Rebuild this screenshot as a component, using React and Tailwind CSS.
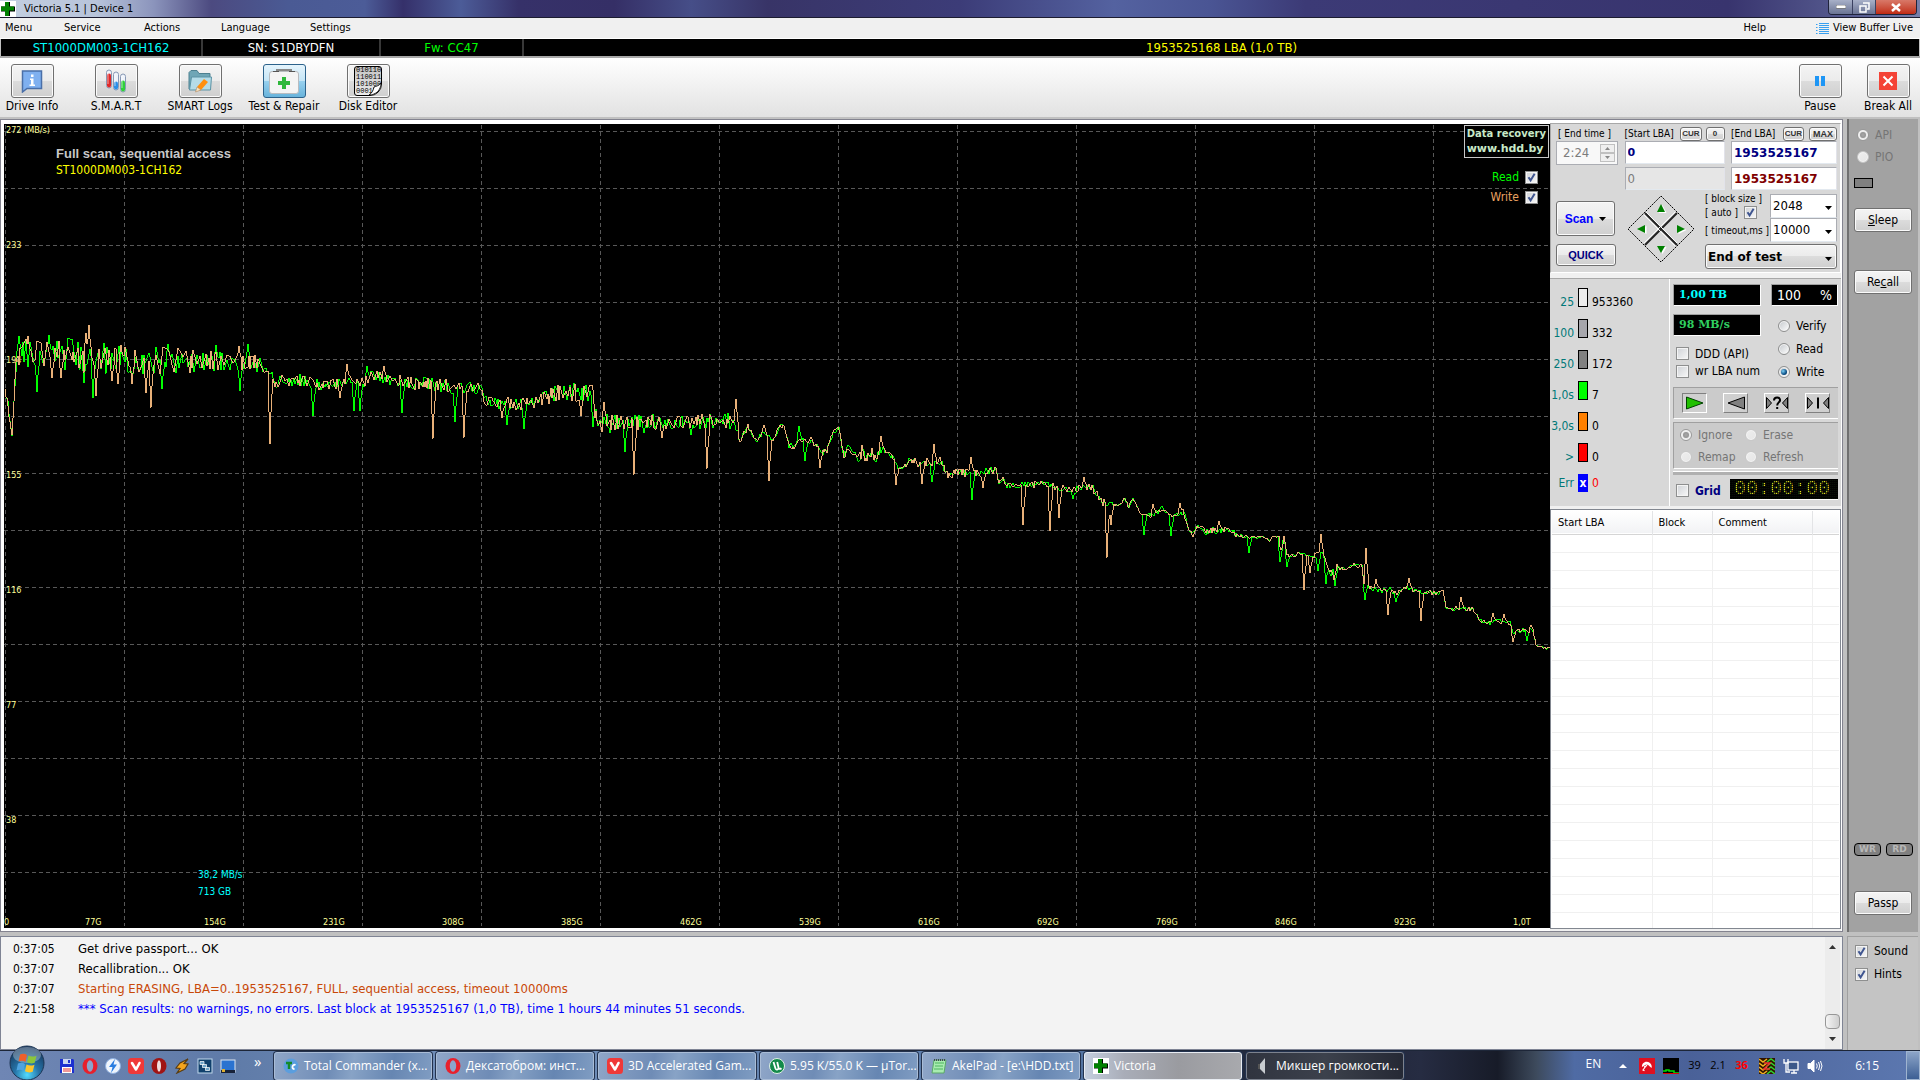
import React from "react";

const ui = "font-['DejaVu_Sans_Condensed','DejaVu_Sans',sans-serif]";

/* ---------- chart data: [x, y, spread] along the curve, then single peaks [x, y] ---------- */
const BASE = [
  [5,389,2],[8,405,4],[12,438,3],[15,380,6],[18,354,15],[60,355,15],[100,357,15],[124,360,13],[160,360,12],[200,361,10],[240,362,8],[262,364,7],
  [267,371,1],[272,373,2],[275,386,4],[284,378,5],[292,384,5],[300,380,6],[320,386,5],[335,384,5],[350,380,5],[365,382,6],[372,376,5],[395,380,5],
  [415,383,6],[440,385,7],[460,387,7],[480,388,5],[486,402,5],[500,403,6],[520,405,6],[545,398,7],[560,393,8],[592,393,8],[597,422,7],[735,421,7],
  [740,440,2],[748,427,3],[757,441,1],[764,429,4],[773,441,1],[780,426,3],[784,426,1],[789,445,3],[793,448,3],[798,440,3],[813,441,4],[823,452,3],
  [827,450,3],[833,433,3],[839,428,2],[844,457,3],[847,447,3],[852,452,3],[860,458,5],[862,450,4],[866,460,4],[872,453,4],[876,460,3],[880,450,3],
  [884,450,4],[889,455,3],[894,457,2],[898,469,1],[903,468,1],[909,460,4],[919,463,4],[927,462,4],[931,467,3],[940,460,4],[946,473,3],[950,477,4],
  [954,472,3],[968,473,4],[980,473,5],[996,470,3],[999,483,4],[1003,477,4],[1005,485,3],[1021,485,3],[1033,485,3],[1042,482,2],[1046,485,3],
  [1062,488,4],[1076,490,3],[1082,487,4],[1093,487,5],[1099,498,3],[1103,503,3],[1109,502,4],[1115,505,1],[1121,504,1],[1125,498,2],[1129,507,2],
  [1133,498,2],[1140,512,1],[1144,515,1],[1152,515,2],[1162,508,3],[1168,513,2],[1172,516,1],[1184,512,3],[1188,528,2],[1192,533,3],[1196,527,2],
  [1202,528,2],[1205,532,3],[1211,530,3],[1227,530,3],[1232,532,3],[1237,535,2],[1246,537,2],[1255,538,2],[1262,536,0],[1270,540,2],[1273,536,0],
  [1279,537,1],[1281,550,2],[1284,538,2],[1287,555,2],[1293,555,2],[1303,553,1],[1306,555,1],[1312,557,2],[1318,555,3],[1322,553,2],[1327,565,3],
  [1330,572,4],[1337,567,4],[1345,569,1],[1354,566,3],[1362,566,2],[1364,583,2],[1368,585,1],[1371,589,3],[1389,590,3],[1398,593,3],[1405,587,1],
  [1414,590,2],[1425,593,1],[1429,592,2],[1437,594,2],[1443,590,1],[1446,607,1],[1451,609,3],[1473,609,2],[1480,620,1],[1487,623,2],[1498,621,2],
  [1510,623,2],[1513,633,1],[1518,631,2],[1533,630,2],[1536,645,1],[1546,648,1],[1550,647,1],
];
const WRITE_PEAKS = [
  [28,336],[52,378],[61,378],[86,333],[89,325],[96,396],[112,381],[118,384],[121,345],[132,384],[146,393],[151,408],[239,346],[270,444],[340,398],
  [347,364],[384,366],[433,439],[464,438],[502,418],[581,416],[602,432],[604,402],[634,475],[662,438],[707,469],[736,399],[769,481],[820,468],
  [881,436],[896,485],[922,484],[934,444],[971,457],[983,488],[1023,525],[1050,531],[1059,518],[1084,477],[1107,558],[1111,525],[1153,504],
  [1180,503],[1193,537],[1219,521],[1281,550],[1304,590],[1310,573],[1321,534],[1334,580],[1366,548],[1376,579],[1388,615],[1409,578],
  [1421,621],[1461,597],[1493,613],[1504,614],[1513,642],[1531,625],
];
const READ_PEAKS = [
  [19,336],[37,392],[49,335],[84,383],[93,398],[162,389],[168,344],[216,345],[240,391],[248,344],[313,416],[354,411],[360,411],[367,366],[402,413],
  [455,422],[507,425],[524,429],[574,383],[593,427],[610,433],[625,452],[644,433],[691,435],[799,426],[805,461],[932,482],[972,500],[1073,499],
  [1144,535],[1171,536],[1249,553],[1280,562],[1287,567],[1318,571],[1326,584],[1335,586],[1365,600],[1396,602],[1527,641],
];

function trace(peaks, seed) {
  let s = seed;
  const rnd = () => {
    s = (s * 16807) % 2147483647;
    return s / 2147483647;
  };
  const pts = [];
  let k = 0;
  let sign = 1;
  let prev = 0;
  let next = 0;
  let left = 0;
  let span = 1;
  for (let x = 5; x <= 1550; x += 1) {
    while (k < BASE.length - 2 && BASE[k + 1][0] <= x) k += 1;
    const a = BASE[k];
    const b = BASE[k + 1];
    const t = Math.min(1, (x - a[0]) / (b[0] - a[0]));
    const mid = a[1] + (b[1] - a[1]) * t;
    const amp = a[2] + (b[2] - a[2]) * t;
    if (left === 0) {
      prev = next;
      sign = rnd() > 0.2 ? -sign : sign;
      next = sign * (0.15 + rnd());
      span = 1 + Math.floor(rnd() * (amp > 8 ? 4 : 3));
      left = span;
    }
    left -= 1;
    let y = mid + amp * (prev + (next - prev) * (1 - left / span));
    for (const p of peaks) {
      const d = Math.abs(p[0] - x);
      if (d === 0) y = p[1];
      else if (d === 1) y = mid + (p[1] - mid) * 0.55;
      else if (d === 2 && x > p[0]) y = mid + (p[1] - mid) * 0.3;
    }
    pts.push(`${x},${Math.round(y)}`);
  }
  return pts.join(" ");
}
const READ = trace(READ_PEAKS, 4711);
const WRITE = trace(WRITE_PEAKS, 90210);

const H_LINES = Array.from({ length: 14 }, (_, i) => 131 + i * 57);
const V_LINES = Array.from({ length: 13 }, (_, i) => 5 + i * 119);
const Y_LABELS = ["272 (MB/s)", "233", "194", "155", "116", "77", "38"];
const X_LABELS = ["77G", "154G", "231G", "308G", "385G", "462G", "539G", "616G", "692G", "769G", "846G", "923G", "1,0T"];

/* ---------- small controls ---------- */
function Check({ label, checked = false, before = false, className = "", aria }) {
  const box = (
    <span className="relative inline-flex h-[13px] w-[13px] shrink-0">
      <input type="checkbox" defaultChecked={checked} aria-label={aria} className="peer h-[13px] w-[13px] appearance-none border border-[#8e8f8f] bg-gradient-to-br from-[#cfd2d6] to-[#f8f8f8] shadow-[inset_0_0_0_1px_#f4f4f4]" />
      <svg viewBox="0 0 13 13" className="pointer-events-none absolute inset-0 hidden peer-checked:block">
        <path d="M3.5 6.2 L5.6 9.4 L9.6 2.8" fill="none" stroke="#3f5590" strokeWidth="2" />
      </svg>
    </span>
  );
  return (
    <label className={`flex items-center gap-1.5 whitespace-nowrap ${className}`}>
      {before ? label : null}
      {box}
      {before ? null : label}
    </label>
  );
}

function Radio({ label, name, checked = false, disabled = false, className = "" }) {
  return (
    <label className={`flex items-center gap-1.5 whitespace-nowrap ${disabled ? "text-[#757575]" : "text-black"} ${className}`}>
      <span className="relative inline-flex h-3 w-3 shrink-0">
        <input type="radio" name={name} defaultChecked={checked} disabled={disabled} className="peer h-3 w-3 appearance-none rounded-full border border-[#8e8f8f] bg-gradient-to-br from-[#c4c8cc] to-white shadow-[inset_0_0_0_1px_#f4f4f4] checked:disabled:border-[#999999] disabled:border-[#c8c8c8] disabled:from-[#eeeeee] disabled:to-[#e6e6e6]" />
        <span className="pointer-events-none absolute left-[3px] top-[3px] hidden h-1.5 w-1.5 rounded-full bg-[radial-gradient(circle_at_35%_35%,#7fd0f5,#0a4f86_60%,#06294a)] peer-checked:block peer-checked:peer-disabled:bg-[radial-gradient(circle,#a8a8a8,#8a8a8a)]" />
      </span>
      {label}
    </label>
  );
}

const raised = "border border-[#707070] rounded-[3px] bg-[linear-gradient(#f4f4f4_0%,#ebebeb_50%,#dcdcdc_50%,#cfcfcf_100%)] shadow-[inset_0_0_0_1px_#fbfbfb]";

function ToolButton({ label, children, active = false }) {
  return (
    <button type="button" className="flex w-16 flex-col items-center whitespace-nowrap text-[12px] leading-4 text-black">
      <span className={`flex h-[34px] w-[43px] items-center justify-center ${active ? "rounded-[3px] border border-[#2c628b] bg-[linear-gradient(#e5f4fc_0%,#c4e5f6_50%,#98d1ef_50%,#68b3db_100%)]" : raised}`}>
        {children}
      </span>
      {label}
    </button>
  );
}

const CrossIcon = ({ className }) => (
  <svg viewBox="0 0 16 16" className={className}>
    <rect width="16" height="16" fill="#fff" />
    <path d="M5 1h5v4.5h5v5h-5V15H5v-4.5H1v-5h4z" fill="#000" />
    <path d="M5 1h4v4.5h5v4h-5V15H5v-5H1V5.500h4z" fill="#008000" />
  </svg>
);

const InfoIcon = () => (
  <svg viewBox="0 0 22 24" className="h-6 w-[22px]">
    <path d="M1.500 2h19v17.500H6L1.500 23z" fill="#7fb0f0" stroke="#4a6fa8" strokeWidth="1.500" />
    <path d="M10 5.500h2.500v2.500H10zM9 9.500h3.500v6h1.500v1.500H8.500v-1.500H10v-4.500H9z" fill="#fff" />
  </svg>
);
const TubesIcon = () => (
  <svg viewBox="0 0 22 24" className="h-6 w-[22px]">
    {[[1, 1, "#e02828", 14], [8, 3, "#2a8fe8", 8], [15, 5, "#2fd03a", 11]].map(([x, y, c, h]) => (
      <g key={c}>
        <rect x={x + 0.5} y={y} width="5" height="18" rx="2.500" fill="#eef3fa" stroke="#8898b4" />
        <rect x={x + 1} y={y + 17.500 - h} width="4" height={h} rx="2" fill={c} />
        <rect x={x + 1.500} y={y + 2} width="1" height="12" fill="#fff" opacity=".6" />
      </g>
    ))}
  </svg>
);
const FolderIcon = () => (
  <svg viewBox="0 0 26 24" className="h-6 w-[26px]">
    <path d="M2 20V3.500L4 1.500h6l2 3h11V20z" fill="#6fa6b6" stroke="#4d8090" />
    <path d="M4.500 8h20L23.500 21H2.500z" fill="#b5dce8" stroke="#5c93a5" />
    <path d="M10 18l7-8 4 3-7 8z" fill="#ff9010" />
    <path d="M10 18l4 3-5.500 2z" fill="#fbe3c0" stroke="#b08a60" strokeWidth=".6" />
  </svg>
);
const KitIcon = () => (
  <svg viewBox="0 0 32 28" className="h-7 w-8">
    <path d="M9 5V3h14v2" fill="none" stroke="#888" strokeWidth="2" />
    <rect x="1.500" y="4.500" width="29" height="22" rx="2.500" fill="#f4f4f4" stroke="#b8bcc0" />
    <path d="M5 4.500h6M21 4.500h6" stroke="#555" strokeWidth="1" />
    <path d="M14 10h4v4h4v4h-4v4h-4v-4h-4v-4h4z" fill="#2fb83c" />
  </svg>
);
const BinaryIcon = () => (
  <span className="relative block h-[30px] w-[28px] overflow-hidden rounded-[3px] rounded-br-[12px] border border-black bg-gradient-to-b from-[#c4c4c4] to-[#ececec] pl-px text-left font-['Liberation_Mono',monospace] text-[7px] leading-[7px] text-black">
    010110<br />110011<br />101000<br />0001
    <svg viewBox="0 0 12 12" className="absolute bottom-0 right-0 h-3 w-3">
      <path d="M12 0C10 3 7 3 5 4 4 8 3 10 0 12c7 0 12-5 12-12z" fill="#fff" stroke="#111" strokeWidth="1" />
    </svg>
  </span>
);

const field = "min-w-0 border border-[#abadb3] border-b-[#e3e9ef] border-r-[#e2e3ea] px-0.5 h-[23px] w-full leading-none";

function Tiny({ children }) {
  return <button type="button" className={`${raised} h-[14px] min-w-[19px] shrink-0 px-px font-['Liberation_Sans',sans-serif] text-[8px] font-bold leading-[12px] text-[#333]`}>{children}</button>;
}

function DropBox({ value, label, className = "" }) {
  return (
    <span className={`relative flex ${className}`}>
      <select aria-label={label} defaultValue={value} className="w-full appearance-none bg-transparent pl-0.5">
        <option>{value}</option>
      </select>
      <svg viewBox="0 0 7 4" className="pointer-events-none absolute right-1 top-1/2 h-1 w-[7px]"><path d="M0 0h7L3.500 4z" /></svg>
    </span>
  );
}

function Pad() {
  const arrows = ["M33 8l4 8h-8z", "M9 33l8-4v8z", "M57 33l-8-4v8z", "M33 57l-4-7h8z"];
  return (
    <svg viewBox="0 0 66 66" className="mt-0.5 h-[66px] w-[66px] shrink-0">
      <path d="M33 0L66 33 33 66 0 33z" fill="#d8d8d8" stroke="#000" strokeDasharray="2 1" />
      <path d="M17 17l32 32M49 17L17 49" stroke="#222" strokeWidth="2" />
      <path d="M16 19l31 31M18 16l31 31M47 16L16 47" stroke="#fafafa" />
      {arrows.map((d) => (
        <g key={d}>
          <path d={d} fill="#fff" transform="translate(1.500 1)" />
          <path d={d} fill="#008000" />
        </g>
      ))}
    </svg>
  );
}

const LEGEND = [
  ["25", "bg-[#ececec]", "953360"],
  ["100", "bg-[#a6a6ac]", "332"],
  ["250", "bg-[#808080]", "172"],
  ["1,0s", "bg-[#00ff00]", "7"],
  ["3,0s", "bg-[#ff8000]", "0"],
  [">", "bg-[#ff0000]", "0"],
];

const lcd = "flex h-[22px] items-center border border-[#a0a0a0] border-b-white border-r-white bg-black px-[5px]";

/* ---------- sections ---------- */
function Chart() {
  return (
    <div className="relative min-w-0 flex-1 overflow-hidden bg-black">
      <svg className="absolute inset-0 h-full w-full" shapeRendering="crispEdges" role="img" aria-label="Transfer speed chart">
        <g transform="translate(-4 -124)">
          <g stroke="#585858" strokeWidth="1" strokeDasharray="4 3" fill="none">
            {H_LINES.map((y) => <path key={y} d={`M4 ${y + 0.5}H1551`} />)}
            {V_LINES.map((x) => <path key={x} d={`M${x + 0.5} 125V926`} />)}
          </g>
          <g fill="#ffff99" className="font-['DejaVu_Sans_Condensed','DejaVu_Sans',sans-serif] text-[9px]" shapeRendering="auto">
            {Y_LABELS.map((t, i) => <text key={t} x="6" y={133 + i * 115}>{t}</text>)}
            <text x="4" y="925">0</text>
            {X_LABELS.map((t, i) => <text key={t} x={85 + i * 119} y="925">{t}</text>)}
          </g>
          <polyline points={READ} fill="none" stroke="#00ff00" />
          <polyline points={WRITE} fill="none" stroke="#e8b078" />
        </g>
      </svg>
      <div className="absolute left-[52px] top-[22px] font-['Liberation_Sans',sans-serif] text-[13px] font-bold leading-4 text-[#c8c8c8]">Full scan, sequential access</div>
      <div className="absolute left-[52px] top-[38px] text-[12px] leading-4 text-[#ffff00]">ST1000DM003-1CH162</div>
      <div className="absolute bottom-[28px] left-[194px] text-[10px] leading-[17px] text-[#00ffff]">38,2 MB/s<br />713 GB</div>
      <div className="absolute right-px top-px border border-[#c8c8c8] bg-black px-[2px] pb-0.5 font-['DejaVu_Sans',sans-serif] font-bold text-[#c8e8c8]">
        <div className="text-[10px] leading-4">Data recovery</div>
        <div className="text-[11px] leading-[13px]">www.hdd.by</div>
      </div>
      <div className="absolute right-3 top-[46px] flex flex-col items-end gap-[5px] text-[12px] leading-[15px]">
        <Check before checked label={<span className="text-[#00ff00]">Read</span>} />
        <Check before checked label={<span className="text-[#e8a060]">Write</span>} />
      </div>
    </div>
  );
}

function ScanSettings() {
  return (
    <section className="flex h-[150px] shrink-0 flex-col border border-[#a8a8a8] border-b-white border-r-white bg-[#d8d8d8] pl-[5px] pr-[3px] pt-0.5 text-[11px]">
      <div className="grid grid-cols-[62px_100px_106px] justify-between">
        <div>
          <label htmlFor="endtime" className="flex h-[15px] items-center pl-0.5 text-[10px]">[ End time ]</label>
          <div className="flex h-[24px] items-center justify-between border border-[#abadb3] bg-[#f8f8f8] pl-1.5 pr-0.5 text-[13px] text-[#7c7c7c]">
            <input id="endtime" defaultValue="2:24" disabled className="w-8 bg-transparent" />
            <span className="flex flex-col">
              <button type="button" aria-label="Later" className="flex h-[9px] w-[15px] items-center justify-center border border-[#c0c0c0] bg-[#efefef]"><svg viewBox="0 0 5 3" className="w-[5px]"><path d="M0 3h5L2.500 0z" fill="#888" /></svg></button>
              <button type="button" aria-label="Earlier" className="flex h-[9px] w-[15px] items-center justify-center border border-[#c0c0c0] bg-[#efefef]"><svg viewBox="0 0 5 3" className="w-[5px]"><path d="M0 0h5L2.500 3z" fill="#888" /></svg></button>
            </span>
          </div>
        </div>
        <div>
          <div className="flex h-[15px] items-center gap-1 whitespace-nowrap text-[10px]"><label htmlFor="startlba" className="flex-1">[Start LBA]</label><Tiny>CUR</Tiny><Tiny>0</Tiny></div>
          <input id="startlba" defaultValue="0" className={`${field} bg-white font-['DejaVu_Sans',sans-serif] text-[11px] font-bold text-[#000080]`} />
          <input aria-label="Current LBA" defaultValue="0" disabled className={`${field} mt-[3px] bg-[#e6e6e6] text-[13px] text-[#7c7c7c]`} />
        </div>
        <div>
          <div className="flex h-[15px] items-center gap-[5px] whitespace-nowrap text-[10px]"><label htmlFor="endlba" className="flex-1">[End LBA]</label><Tiny>CUR</Tiny><Tiny><span className="px-0.5 text-[9px]">MAX</span></Tiny></div>
          <input id="endlba" defaultValue="1953525167" className={`${field} bg-white font-['DejaVu_Sans',sans-serif] text-[12px] font-bold text-[#000080]`} />
          <input aria-label="Last LBA" defaultValue="1953525167" className={`${field} mt-[3px] bg-white font-['DejaVu_Sans',sans-serif] text-[12px] font-bold text-[#800000]`} />
        </div>
      </div>
      <div className="mt-1 flex justify-between">
        <div className="flex flex-col gap-2 pt-[7px]">
          <button type="button" className={`${raised} flex h-[35px] w-[59px] items-center justify-center gap-1.5 font-['Liberation_Sans',sans-serif] text-[12px] font-bold text-[#0000ff]`}>Scan<svg viewBox="0 0 7 4" className="w-[7px]"><path d="M0 0h7L3.500 4z" /></svg></button>
          <button type="button" className={`${raised} h-[22px] w-[60px] font-['Liberation_Sans',sans-serif] text-[11px] font-bold text-[#000080]`}>QUICK</button>
        </div>
        <Pad />
        <div className="flex w-[132px] flex-col gap-0.5">
          <div className="flex">
            <div className="flex flex-1 flex-col whitespace-nowrap text-[10px] leading-[10px]">
              <span>[ block size ]</span>
              <Check before label="[ auto ]" checked className="mt-0.5" />
              <span className="mt-[7px]">[ timeout,ms ]</span>
            </div>
            <div className="flex w-[67px] flex-col text-[13px]">
              <DropBox label="block size" value="2048" className="h-[24px] border border-[#abadb3] border-b-[#e3e9ef] bg-white" />
              <DropBox label="timeout,ms" value="10000" className="h-[24px] border border-[#abadb3] border-b-[#e3e9ef] bg-white" />
            </div>
          </div>
          <DropBox label="After the scan" value="End of test" className={`${raised} h-[25px] text-[12px] font-bold font-['DejaVu_Sans',sans-serif]`} />
        </div>
      </div>
    </section>
  );
}

function Transport({ label, pressed, children }) {
  return (
    <button type="button" aria-label={label} className={`flex h-5 w-[25px] items-center justify-center border ${pressed ? "border-[#808080] border-b-white border-r-white" : "border-white border-b-[#808080] border-r-[#808080]"} bg-[#cfcfcf]`}>
      <svg viewBox="0 0 22 16" className="h-4 w-[22px]" fill="#808080" stroke="#000">{children}</svg>
    </button>
  );
}

function Status() {
  return (
    <section className="mt-[5px] flex h-[228px] shrink-0 border-t border-[#a8a8a8] bg-[#d8d8d8] text-[12px]">
      <ul className="flex w-[120px] flex-col border-r border-white pt-[9px]">
        {LEGEND.map(([name, color, n]) => (
          <li key={name} className="flex h-[31px] items-start">
            <span className="mt-[7px] w-[26px] pr-0.5 text-right leading-[15px] text-[#007878]">{name}</span>
            <span className={`ml-[2px] h-[19px] w-[10px] border border-black ${color}`} />
            <span className="mt-[7px] pl-1 leading-[15px]">{n}</span>
          </li>
        ))}
        <li className="flex items-center">
          <span className="w-[26px] pr-0.5 text-right text-[#007878]">Err</span>
          <span className="ml-[2px] flex h-[18px] w-[10px] items-center justify-center bg-[#0000ff] font-bold text-white">x</span>
          <span className="pl-1 text-[#ff0000]">0</span>
        </li>
      </ul>
      <div className="flex flex-1 flex-col pl-[3px] pr-[3px] pt-[5px]">
        <div className="flex justify-between">
          <div className="flex w-[88px] flex-col">
            <div className={`${lcd} font-['DejaVu_Serif','DejaVu_Sans',serif] text-[11px] font-bold text-[#00ffff]`}>1,00 TB</div>
            <div className={`${lcd} mt-2 font-['DejaVu_Serif','DejaVu_Sans',serif] text-[11px] font-bold text-[#30d060]`}>98 MB/s</div>
            <Check className="mt-[9px] h-[17px] pl-[3px]" label="DDD (API)" />
            <Check className="h-[18px] pl-[3px]" label="wr LBA num" />
          </div>
          <div className="flex w-[67px] flex-col">
            <div className={`${lcd} justify-between text-[14px] text-white`}><span>100</span><span>%</span></div>
            <Radio className="mt-[8px] h-[23px] pl-[7px]" name="mode" label="Verify" />
            <Radio className="h-[23px] pl-[7px]" name="mode" label="Read" />
            <Radio className="h-[23px] pl-[7px]" name="mode" label="Write" checked />
          </div>
        </div>
        <div className="mt-[4px] flex h-[32px] items-center justify-between border-l border-t border-b border-[#a0a0a0] border-b-white bg-[#cbcbcb] px-[8px]">
          <Transport label="Forward" pressed><path d="M2.500 2v12L19 8z" fill="#20c000" stroke="#004000" /></Transport>
          <Transport label="Backward"><path d="M19.500 2v12L3 8z" /></Transport>
          <Transport label="Random"><path d="M.5 2.500v11l5-5.500zM21.500 2.500v11l-5-5.500z" /><path d="M8 5.500c0-4 6.500-4 6 0-.3 2-2.800 2-2.800 5M11.200 12v2" fill="none" strokeWidth="2" /></Transport>
          <Transport label="Butterfly"><path d="M.5 2.500v11l5-5.500zM21.500 2.500v11l-5-5.500z" /><path d="M11 2.500v11" strokeWidth="2" /></Transport>
        </div>
        <div className="mt-[3px] grid h-[47px] grid-cols-[65px_1fr] content-around border-l border-t border-b border-[#a0a0a0] border-b-white bg-[#cbcbcb] pl-[6px] pt-px">
          <Radio name="bad" label="Ignore" checked disabled />
          <Radio name="bad" label="Erase" disabled />
          <Radio name="bad" label="Remap" disabled />
          <Radio name="bad" label="Refresh" disabled />
        </div>
        <div className="mt-[2px] h-1 border-t border-white bg-[#b0b0b0]" />
        <div className="mt-[4px] flex items-center justify-between">
          <Check className="pl-[3px] pt-0.5" label={<span className="font-['DejaVu_Sans_Condensed','DejaVu_Sans',sans-serif] font-bold text-[#000080]">Grid</span>} />
          <div className="relative flex h-[21px] w-[108px] items-center border-b border-white bg-black pl-1 font-['Liberation_Mono',monospace] text-[20px] leading-none text-[#e0e020]">
            00:00:00
            <span className="pointer-events-none absolute inset-0 bg-[repeating-linear-gradient(90deg,transparent_0_1px,#000000b0_1px_2px),repeating-linear-gradient(transparent_0_1px,#0a1408c0_1px_2px)]" />
          </div>
        </div>
      </div>
    </section>
  );
}

function DefectTable() {
  return (
    <div className="mt-[3px] flex min-h-0 flex-1 flex-col overflow-hidden border border-[#828790] bg-white p-px">
      <table className="w-full table-fixed border-collapse text-[11px]">
        <colgroup><col className="w-[100px]" /><col className="w-[60px]" /><col className="w-[100px]" /><col /></colgroup>
        <thead>
          <tr className="h-[23px] border-b border-[#d5d5d5] bg-gradient-to-b from-white to-[#f2f3f5] text-left">
            <th className="border-r border-[#e3e4e6] pl-1.5 pt-0.5 font-normal">Start LBA</th>
            <th className="border-r border-[#e3e4e6] pl-1.5 pt-0.5 font-normal">Block</th>
            <th className="border-r border-[#e3e4e6] pl-1.5 pt-0.5 font-normal">Comment</th>
            <th aria-label="Spare" />
          </tr>
        </thead>
        <tbody>
          {Array.from({ length: 22 }, (_, i) => (
            <tr key={i} className="h-[18px] border-b border-[#f0f0f0]">
              <td className="border-r border-[#f0f0f0]" /><td className="border-r border-[#f0f0f0]" /><td className="border-r border-[#f0f0f0]" /><td />
            </tr>
          ))}
        </tbody>
      </table>
    </div>
  );
}

function SideColumn() {
  const btn = `${raised} h-6 w-[58px] text-[12px]`;
  return (
    <aside className="mr-0.5 flex w-[71px] flex-col border-l-2 border-[#707070] bg-[#a2a2a2] px-[5px] pb-[17px] pt-[6px] text-[12px]">
      <Radio className="h-[19px] pl-[3px]" name="api" label="API" checked disabled />
      <Radio className="mt-[3px] h-[19px] pl-[3px]" name="api" label="PIO" disabled />
      <span className="mt-[12px] h-[10px] w-[19px] border border-black bg-[#808080]" />
      <button type="button" className={`${btn} mt-5`}><u>S</u>leep</button>
      <button type="button" className={`${btn} mt-[38px]`}>Re<u>c</u>all</button>
      <div className="mt-auto flex justify-between text-center font-['DejaVu_Sans',sans-serif] text-[9px] font-bold leading-[11px] text-[#b8b8b8]">
        <span className="w-[27px] rounded-sm border border-black bg-[#808080]">WR</span>
        <span className="w-[27px] rounded-sm border border-black bg-[#808080]">RD</span>
      </div>
      <button type="button" className={`${btn} mt-[35px]`}>Passp</button>
    </aside>
  );
}

const LOG = [
  ["0:37:05", "Get drive passport... OK", "text-black"],
  ["0:37:07", "Recallibration... OK", "text-black"],
  ["0:37:07", "Starting ERASING, LBA=0..1953525167, FULL, sequential access, timeout 10000ms", "text-[#c84808]"],
  ["2:21:58", "*** Scan results: no warnings, no errors. Last block at 1953525167 (1,0 TB), time 1 hours 44 minutes 51 seconds.", "text-[#0000ff]"],
];

function Log() {
  return (
    <div className="flex h-[114px] shrink-0 gap-1">
      <div className="flex flex-1 border border-[#7f8494] bg-[#f3f3f3]">
        <ul className="flex flex-1 flex-col pl-3 pt-[2px] text-[13px] leading-5">
          {LOG.map(([t, m, c], i) => (
            <li key={i} className="flex"><span className="w-[65px] text-[12px]">{t}</span><span className={c}>{m}</span></li>
          ))}
        </ul>
        <div className="mr-0.5 flex w-[15px] flex-col items-center bg-[#ececec] py-2">
          <svg viewBox="0 0 7 4" className="h-1 w-[7px]"><path d="M0 4h7L3.500 0z" fill="#333" /></svg>
          <span className="mt-auto h-[15px] w-[15px] rounded-sm border border-[#979797] bg-gradient-to-r from-[#f5f5f5] to-[#cfcfcf]" />
          <svg viewBox="0 0 7 4" className="mt-2 h-1 w-[7px]"><path d="M0 0h7L3.500 4z" fill="#333" /></svg>
        </div>
      </div>
      <div className="mr-0.5 flex w-[71px] flex-col gap-[10px] border-l border-t border-[#a0a0a0] bg-[#c4c4c4] pl-[7px] pt-[8px] text-[12px] leading-[13px]">
        <Check label="Sound" checked />
        <Check label="Hints" checked />
      </div>
    </div>
  );
}

/* ---------- taskbar ---------- */
const OperaIcon = ({ dark = false }) => (
  <svg viewBox="0 0 16 16" className="h-4 w-4 shrink-0">
    <ellipse cx="8" cy="8" rx="7.500" ry="8" fill={dark ? "#a01414" : "#e8202c"} />
    <ellipse cx="8" cy="8" rx={dark ? 2 : 3.200} ry="5.800" fill={dark ? "#f0dede" : "#8ba5cc"} />
  </svg>
);
const VivaldiIcon = () => (
  <svg viewBox="0 0 16 16" className="h-4 w-4 shrink-0">
    <rect width="16" height="16" rx="3.500" fill="#ef3939" />
    <path d="M4 5l4 6.500L11.500 5" fill="none" stroke="#fff" strokeWidth="2.600" strokeLinecap="round" strokeLinejoin="round" />
  </svg>
);
const QUICK = [
  ["Save", <svg key="a" viewBox="0 0 16 16" className="h-4 w-4"><path d="M1 1h13l1 1v13H1z" fill="#1c2fd0" /><path d="M4 1h8v5H4z" fill="#c8d4f0" /><path d="M9 2h2v3H9z" fill="#1c2fd0" /><path d="M3 9h10v6H3z" fill="#fff" /><path d="M4 11h8M4 13h8" stroke="#e03030" /></svg>],
  ["Opera", <OperaIcon key="b" />],
  ["Daemon Tools", <svg key="c" viewBox="0 0 16 16" className="h-4 w-4"><circle cx="8" cy="8" r="7.500" fill="#eef4fc" stroke="#8fb0e0" /><path d="M10 1L4 9h3.500L6 15l6-8.500H8.500z" fill="#2a7de0" /></svg>],
  ["Vivaldi", <VivaldiIcon key="d" />],
  ["Opera 12", <OperaIcon key="e" dark />],
  ["Winamp", <svg key="f" viewBox="0 0 16 16" className="h-4 w-4"><path d="M14 1L6 5 2 10l4 .5L3 15l8-4 3-5-4-.5z" fill="#f5a51d" stroke="#5a3c10" strokeWidth="1.200" /></svg>],
  ["Windows", <svg key="g" viewBox="0 0 16 16" className="h-4 w-4"><rect x="1" y="1" width="14" height="14" fill="#10406c" stroke="#c0d8ec" /><path d="M3 3.500h4v3H3zM5.500 6.500h4v3h-4zM8.500 9.500h4v3h-4z" fill="#6fa4c8" stroke="#fff" strokeWidth=".7" /></svg>],
  ["Desktop", <svg key="h" viewBox="0 0 16 16" className="h-4 w-4"><rect x="1" y="2" width="14" height="12" fill="#2b73d0" stroke="#dde6f0" /><path d="M1 12h14v3H1z" fill="#17223a" /><path d="M2 11h3v3H2z" fill="#e0b030" /></svg>],
];
const TASKS = [
  ["Total Commander (x...", "blue", <svg key="1" viewBox="0 0 16 16" className="h-4 w-4 shrink-0"><circle cx="8" cy="8" r="7.500" fill="#5b9ede" /><path d="M3 5h6M6 5v6" stroke="#128a28" strokeWidth="2.400" /><path d="M12.500 7c-3-1.500-4.500 4-1 4" fill="none" stroke="#fff" strokeWidth="1.800" /></svg>],
  ["Дексатобром: инст...", "blue", <OperaIcon key="2" />],
  ["3D Accelerated Gam...", "blue", <VivaldiIcon key="3" />],
  ["5.95 K/55.0 K — µTor...", "blue", <svg key="4" viewBox="0 0 16 16" className="h-4 w-4 shrink-0"><circle cx="8" cy="8" r="7.500" fill="#138a4a" stroke="#dff0e4" /><path d="M4.500 4l2 6.500c.8 2 3.500 1 3-1L8.200 4M9.500 10c.6 1.200 2 1 3 .2" fill="none" stroke="#fff" strokeWidth="1.800" /></svg>],
  ["AkelPad - [e:\\HDD.txt]", "blue", <svg key="5" viewBox="0 0 16 16" className="h-4 w-4 shrink-0"><path d="M3 2h12l-2 13H1z" fill="#a8ecb0" stroke="#5aa868" /><path d="M4 5h9M4 8h8M3 11h9" stroke="#4fb460" /><path d="M3 2h12" stroke="#445" strokeDasharray="1 1" strokeWidth="2" /></svg>],
  ["Victoria", "active", <CrossIcon key="6" className="h-4 w-4 shrink-0" />],
  ["Микшер громкости...", "dark", <svg key="7" viewBox="0 0 16 16" className="h-4 w-4 shrink-0"><path d="M3 6h2v5H3z" fill="#555" /><path d="M10 0v16L5 11V6z" fill="#c8ccd0" /></svg>],
];
const TONES = {
  blue: "bg-[linear-gradient(100deg,#8fa6c8_0%,#6f8cb6_35%,#88a3c6_50%,#6686b2_75%,#7f9cc2_100%)] border-[#a9bcd6]",
  active: "bg-[linear-gradient(90deg,#c4cede_0%,#a9adb8_25%,#9a9ba0_60%,#a8a9ad_100%)] border-[#e8ecf2]",
  dark: "bg-[linear-gradient(90deg,#30343f_0%,#3c414c_50%,#252935_100%)] border-[#7c828e]",
};

function Taskbar() {
  return (
    <nav className="relative flex h-[30px] shrink-0 items-center border-t border-[#1d2638] bg-[linear-gradient(90deg,#6f86b4_0%,#5f7ba8_12%,#7390ba_25%,#5577a6_56%,#1c2030_66%,#262c42_74%,#171b28_78%,#3d4a5c_80%,#4f6ba4_82%,#4a6198_88%,#5c78b0_100%)] font-['Open_Sans','Noto_Sans',sans-serif] text-[12px] text-white">
      <button type="button" aria-label="Start" className="absolute left-[9px] top-[-6px] h-9 w-9">
        <svg viewBox="0 0 36 36" className="h-9 w-9">
          <defs>
            <radialGradient id="orb" cx="50%" cy="85%" r="80%"><stop offset="0" stopColor="#52dcff" /><stop offset=".45" stopColor="#2674a8" /><stop offset="1" stopColor="#17385e" /></radialGradient>
          </defs>
          <circle cx="18" cy="18" r="17" fill="url(#orb)" stroke="#1c3554" />
          <ellipse cx="18" cy="10" rx="14" ry="8" fill="#fff" opacity=".3" />
          <path d="M11 9.500q4-1.500 7 .5l-1.500 7q-3-2-7-.5z" fill="#f0602a" />
          <path d="M19.500 10.500q3.500 2 8 .2l-1.800 7q-4 1.600-7.700-.4z" fill="#8cc63a" />
          <path d="M9 18.500q4-1.500 7 .5l-1.500 7q-3-2-7-.5z" fill="#4fa3e0" />
          <path d="M17.500 19.500q3.500 2 8 .2l-1.800 7q-4 1.600-7.700-.4z" fill="#fcc52c" />
        </svg>
      </button>
      <div className="ml-[59px] flex gap-[7px]">
        {QUICK.map(([n, icon]) => <button type="button" key={n} aria-label={n}>{icon}</button>)}
      </div>
      <span className="ml-[18px] w-[17px] pb-2 text-[15px] leading-none">»</span>
      <div className="ml-[3px] flex gap-1">
        {TASKS.map(([t, tone, icon]) => (
          <button type="button" key={t} className={`flex h-[28px] w-[158px] items-center gap-[5px] whitespace-nowrap rounded-[3px] border px-2 shadow-[0_0_0_1px_#23324e] ${TONES[tone]}`}>{icon}{t}</button>
        ))}
      </div>
      <div className="ml-auto flex h-full items-center text-[11px] text-black">
        <span className="mr-[18px] pb-1 text-[12px] text-white">EN</span>
        <svg viewBox="0 0 8 4" className="mr-3 h-1 w-2"><path d="M0 4h8L4 0z" fill="#fff" /></svg>
        <svg viewBox="0 0 16 16" className="mr-2 h-4 w-4"><rect width="16" height="16" fill="#e01020" /><path d="M3 9C2.500 5 7 2 11 5c2 2 2 4 1.500 5L8 6z" fill="#fff" /><path d="M8.500 6l-4.500 6 1.500.8M5 9l3-1.500" fill="none" stroke="#fff" strokeWidth="1.200" /></svg>
        <svg viewBox="0 0 16 16" className="mr-[9px] h-4 w-4"><rect width="16" height="16" fill="#000" /><path d="M0 13h3v-1h3v1h5v2h5" fill="none" stroke="#00e000" strokeWidth="1.500" /><path d="M0 15.500h16" stroke="#e00000" /></svg>
        <span className="mr-2 w-[14px]">39</span>
        <span className="mr-2 w-[17px]">2.1</span>
        <span className="mr-[9px] w-[15px] font-bold text-[#ff0000]">36</span>
        <svg viewBox="0 0 16 16" className="mr-2 h-4 w-4"><rect width="16" height="16" fill="#301400" /><path d="M0 1l4 3 4-3M0 5l4 3 4-3M0 9l4 3 4-3M0 13l4 3 4-3" fill="none" stroke="#f0b020" strokeWidth="1.500" /><path d="M8 4l4-3 4 3M8 8l4-3 4 3M8 12l4-3 4 3M8 16l4-3 4 3" fill="none" stroke="#30d030" strokeWidth="1.500" /><path d="M5 5h6L5 11h6" fill="none" stroke="#f03030" strokeWidth="1.500" /></svg>
        <svg viewBox="0 0 16 16" className="mr-2 h-4 w-4" fill="none" stroke="#fff" strokeWidth="1.300"><rect x="5" y="4" width="10" height="8" fill="#3c5888" /><path d="M8 15h6M11 12v3M1 1v4h4V1M3 5v9h4" /></svg>
        <svg viewBox="0 0 16 16" className="mr-8 h-4 w-4" fill="none" stroke="#fff"><path d="M1 5.500h2.500L7 2v12L3.500 10.500H1z" fill="#fff" /><path d="M9.500 5.500q1.500 2.500 0 5M11.500 4q2.500 4 0 8M13.500 3q3 5 0 10" /></svg>
        <time className="mr-[27px] text-[12px] text-white">6:15</time>
        <button type="button" aria-label="Show desktop" className="h-[29px] w-[14px] border border-[#9fb4d0] bg-gradient-to-b from-[#8da5c8] to-[#3d5f94]" />
      </div>
    </nav>
  );
}

export default function App() {
  return (
    <div className={`flex h-screen flex-col overflow-hidden bg-[#c0c0c0] text-black ${ui}`}>
      <header className="flex h-[18px] shrink-0 items-center border-b border-[#1c1c30] bg-[linear-gradient(90deg,#c3cfe0_0%,#b8c4da_5%,#8b94bc_8%,#4c4a80_11%,#4a5a94_15%,#4c5c98_19%,#35306a_21%,#4c5c98_24%,#363169_27%,#352f66_32%,#464e88_36%,#383467_40%,#3c3c78_50%,#5462a0_58%,#4a5594_63%,#3c3a76_68%,#38346e_90%,#5a6094_97%,#7880aa_100%)]">
        <CrossIcon className="h-4 w-4 shrink-0" />
        <h1 className="ml-2 flex-1 pt-0.5 text-[11px]">Victoria 5.1 | Device 1</h1>
        <div className="mr-[3px] flex h-[15px] self-start overflow-hidden rounded-b-[4px] border border-t-0 border-[#20243c]">
          <button type="button" aria-label="Minimize" className="flex w-6 items-center justify-center border-r border-[#3a4060] bg-gradient-to-b from-[#a8b0c8] to-[#6b7494]"><svg viewBox="0 0 10 4" className="w-[10px]"><rect width="10" height="3.500" rx="1" fill="#fff" stroke="#444" strokeWidth=".6" /></svg></button>
          <button type="button" aria-label="Restore" className="flex w-[23px] items-center justify-center border-r border-[#3a4060] bg-gradient-to-b from-[#a8b0c8] to-[#6b7494]"><svg viewBox="0 0 11 11" className="w-[11px]" fill="none" stroke="#fff" strokeWidth="1.500"><path d="M4 1h6v6H8M1 4h6v6H1z" /></svg></button>
          <button type="button" aria-label="Close" className="flex w-10 items-center justify-center bg-gradient-to-b from-[#d87868] to-[#c02810]"><svg viewBox="0 0 10 9" className="w-[10px]"><path d="M1 1l8 7M9 1L1 8" stroke="#fff" strokeWidth="2.500" /></svg></button>
        </div>
      </header>

      <nav className="flex h-[21px] shrink-0 items-center border-b border-white bg-[#f0f0f0] px-[5px] pt-px text-[11px]">
        <button type="button" className="w-[59px] text-left">Menu</button>
        <button type="button" className="w-20 text-left">Service</button>
        <button type="button" className="w-[77px] text-left">Actions</button>
        <button type="button" className="w-[89px] text-left">Language</button>
        <button type="button" className="text-left">Settings</button>
        <button type="button" className="ml-auto mr-[50px]">Help</button>
        <button type="button" className="mr-0.5 flex items-center gap-1">
          <svg viewBox="0 0 13 12" className="h-3 w-[13px]" stroke="#38a0f0" strokeWidth="1"><path d="M0 1.500h1.500M0 4.500h1.500M0 7.500h1.500M0 10.500h1.500" /><path d="M3 .5h10M3 2.500h10M3 4.500h10M3 6.500h10M3 8.500h10M3 10.500h10" /></svg>
          View Buffer Live
        </button>
      </nav>

      <div className="mx-px flex h-[17px] shrink-0 bg-black text-center text-[13px] leading-[18px]">
        <span className="w-[202px] border-r-2 border-[#383838] text-[#00ffff]">ST1000DM003-1CH162</span>
        <span className="w-[178px] border-r-2 border-[#383838] text-white">SN: S1DBYDFN</span>
        <span className="w-[143px] border-r-2 border-[#383838] text-[#00ff00]">Fw: CC47</span>
        <span className="flex-1 text-[#ffff00]">1953525168 LBA (1,0 TB)</span>
      </div>

      <div className="flex h-[61px] shrink-0 items-start justify-between border-t-2 border-[#a8a8a8] bg-gradient-to-b from-white to-[#e2e2e2] pt-1.5">
        <div className="flex gap-5">
          <ToolButton label="Drive Info"><InfoIcon /></ToolButton>
          <ToolButton label="S.M.A.R.T"><TubesIcon /></ToolButton>
          <ToolButton label="SMART Logs"><FolderIcon /></ToolButton>
          <ToolButton label="Test & Repair" active><KitIcon /></ToolButton>
          <ToolButton label="Disk Editor"><BinaryIcon /></ToolButton>
        </div>
        <div className="flex gap-1">
          <ToolButton label="Pause"><svg viewBox="0 0 10 10" className="h-[10px] w-[10px]" fill="#1e96f5"><path d="M0 0h4v10H0zM6 0h4v10H6z" /></svg></ToolButton>
          <ToolButton label="Break All"><svg viewBox="0 0 18 18" className="h-[18px] w-[18px]"><rect width="18" height="18" fill="#f44336" /><path d="M4.500 4.500l9 9M13.500 4.500l-9 9" stroke="#fff" strokeWidth="2" /></svg></ToolButton>
        </div>
      </div>

      <main className="flex min-h-0 flex-1 gap-1 pb-1 pt-0.5">
        <div className="flex min-w-0 flex-1 border border-[#83838f] bg-white pl-[3px] pr-px pt-[3px]">
          <div className="flex min-w-0 flex-1 pb-[3px] pt-px"><Chart /></div>
          <div className="flex w-[291px] shrink-0 flex-col bg-[#f0f0f0] pb-[2px]">
            <ScanSettings />
            <Status />
            <DefectTable />
          </div>
        </div>
        <SideColumn />
      </main>

      <Log />
      <Taskbar />
    </div>
  );
}
